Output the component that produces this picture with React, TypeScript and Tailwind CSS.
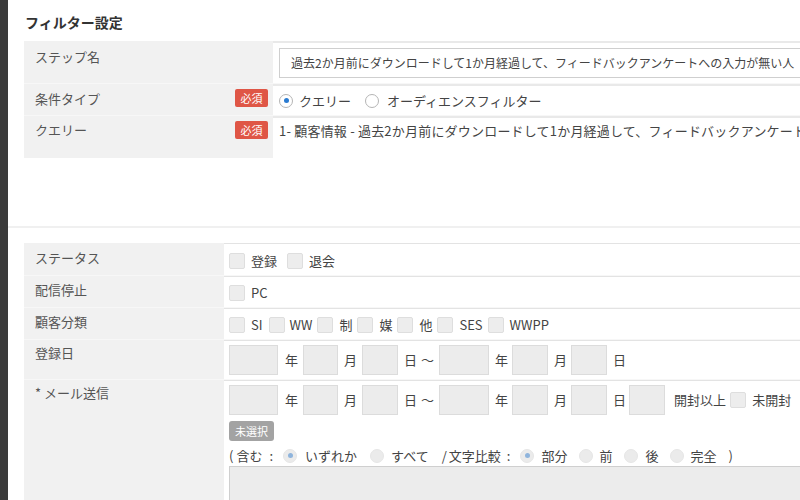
import React from "react";

const font = { fontFamily: '"Noto Sans CJK JP", "Noto Sans", sans-serif' };

function Badge() {
  return (
    <span className="flex h-[18px] w-[33px] items-center justify-center rounded-[2px] bg-[#df5646] text-[11px] leading-none text-white">
      必須
    </span>
  );
}

function Radio({ checked, disabled }: { checked?: boolean; disabled?: boolean }) {
  return (
    <span
      className={
        "flex h-[14px] w-[14px] shrink-0 items-center justify-center rounded-full border " +
        (disabled ? "border-[#e6e6e6] bg-[#ebebeb]" : "border-[#b5b5b5] bg-white")
      }
    >
      {checked ? (
        <span className={"h-[5px] w-[5px] rounded-full " + (disabled ? "bg-[#8fb4dc]" : "bg-[#2a7bd1]")} />
      ) : null}
    </span>
  );
}

function Check() {
  return <span className="block h-[16px] w-[16px] shrink-0 rounded-[2px] border border-[#dedede] bg-[#ededed]" />;
}

function DateBox({ w }: { w: string }) {
  return <span className={"block h-[30px] shrink-0 border border-[#dcdcdc] bg-[#ececec] " + w} />;
}

function DateRow({ extra }: { extra?: boolean }) {
  return (
    <div className="flex h-[30px] items-center text-[13px] leading-[20px] text-[#444]">
      <DateBox w="w-[49px]" />
      <span className="ml-[7px] mr-[5px]">年</span>
      <DateBox w="w-[35px]" />
      <span className="ml-[6px] mr-[5px]">月</span>
      <DateBox w="w-[36px]" />
      <span className="ml-[6px]">日</span>
      <span className="ml-[4px] mr-[5px]">〜</span>
      <DateBox w="w-[50px]" />
      <span className="ml-[6px] mr-[4px]">年</span>
      <DateBox w="w-[36px]" />
      <span className="ml-[6px] mr-[4px]">月</span>
      <DateBox w="w-[36px]" />
      <span className="ml-[6px]">日</span>
      {extra ? (
        <>
          <span className="ml-[3px] flex">
            <DateBox w="w-[36px]" />
          </span>
          <span className="ml-[9px] whitespace-nowrap">開封以上</span>
          <span className="ml-[4px] flex">
            <Check />
          </span>
          <span className="ml-[6px] whitespace-nowrap">未開封</span>
        </>
      ) : null}
    </div>
  );
}

export default function App() {
  return (
    <div className="flex h-[500px] w-[800px] overflow-hidden bg-white text-[#444]" style={font}>
      <div className="w-[8px] shrink-0 bg-[#3b3b3b]" />
      <div className="min-w-0 flex-1 overflow-hidden">
        <div className="w-[900px]">
          <div className="pl-[17px] pt-[12px] text-[14px] font-bold leading-[20px] text-[#333]">フィルター設定</div>

          {/* Table 1 */}
          <div className="ml-[16px] mt-[9px] flex flex-col bg-[#f1f1f1]">
            <div className="flex h-[42px]">
              <div className="w-[249px] shrink-0 pl-[11px] pt-[6px] text-[13px] leading-[20px] text-[#555]">ステップ名</div>
              <div className="flex-1 border-t-[2px] border-[#e9e9e9] bg-white pl-[6px] pt-[5px]">
                <div className="flex h-[30px] items-center border border-[#cfcfcf] bg-white pl-[11px] text-[12px] text-[#444]">
                  過去2か月前にダウンロードして1か月経過して、フィードバックアンケートへの入力が無い人
                </div>
              </div>
            </div>
            <div className="h-[1px] bg-[#f7f7f7]" />
            <div className="flex h-[31px]">
              <div className="flex w-[249px] shrink-0 items-start justify-between pl-[11px] pr-[5px] pt-[5px] text-[13px] leading-[20px] text-[#555]">
                <span>条件タイプ</span>
                <Badge />
              </div>
              <div className="flex flex-1 items-center border-t-[2px] border-[#e9e9e9] bg-white pl-[6px] text-[13px] leading-[20px] text-[#444]">
                <Radio checked />
                <span className="ml-[6px]">クエリー</span>
                <span className="ml-[14px] flex"><Radio /></span>
                <span className="ml-[8px]">オーディエンスフィルター</span>
              </div>
            </div>
            <div className="h-[1px] bg-[#f7f7f7]" />
            <div className="flex h-[42px]">
              <div className="flex w-[249px] shrink-0 items-start justify-between pl-[11px] pr-[5px] pt-[4px] text-[13px] leading-[20px] text-[#555]">
                <span>クエリー</span>
                <span className="mt-[1px] flex"><Badge /></span>
              </div>
              <div className="flex-1 whitespace-nowrap border-t-[2px] border-[#e9e9e9] bg-white pl-[6px] pt-[3px] text-[13px] leading-[20px] tracking-[0.2px] text-[#444]">
                1- 顧客情報 - 過去2か月前にダウンロードして1か月経過して、フィードバックアンケートへの入力が無い人
              </div>
            </div>
          </div>

          <div className="mt-[68px] h-[2px] bg-[#f0f0f0]" />

          {/* Table 2 */}
          <div className="ml-[16px] mt-[15px] flex flex-col bg-[#f1f1f1] text-[13px] leading-[20px]">
            <div className="flex h-[32px]">
              <div className="w-[200px] shrink-0 pl-[11px] pt-[5px] text-[#555]">ステータス</div>
              <div className="flex flex-1 items-center border-t border-[#e3e3e3] bg-white pl-[5px] pt-[2px] text-[#444]">
                <Check />
                <span className="ml-[6px]">登録</span>
                <span className="ml-[10px] flex"><Check /></span>
                <span className="ml-[6px]">退会</span>
              </div>
            </div>
            <div className="h-[1px] bg-[#f7f7f7]" />
            <div className="flex h-[31px]">
              <div className="w-[200px] shrink-0 pl-[11px] pt-[4px] text-[#555]">配信停止</div>
              <div className="flex flex-1 items-center border-t border-[#e3e3e3] bg-white pl-[5px] pt-[2px] text-[#444]">
                <Check />
                <span className="ml-[6px]">PC</span>
              </div>
            </div>
            <div className="h-[1px] bg-[#f7f7f7]" />
            <div className="flex h-[31px]">
              <div className="w-[200px] shrink-0 pl-[11px] pt-[4px] text-[#555]">顧客分類</div>
              <div className="flex flex-1 items-center border-t border-[#e3e3e3] bg-white pl-[5px] pt-[2px] text-[#444]">
                <Check />
                <span className="ml-[6px]">SI</span>
                <span className="ml-[6px] flex"><Check /></span>
                <span className="ml-[5px]">WW</span>
                <span className="ml-[5px] flex"><Check /></span>
                <span className="ml-[6px]">制</span>
                <span className="ml-[5px] flex"><Check /></span>
                <span className="ml-[6px]">媒</span>
                <span className="ml-[5px] flex"><Check /></span>
                <span className="ml-[6px]">他</span>
                <span className="ml-[5px] flex"><Check /></span>
                <span className="ml-[6px]">SES</span>
                <span className="ml-[5px] flex"><Check /></span>
                <span className="ml-[6px]">WWPP</span>
              </div>
            </div>
            <div className="h-[1px] bg-[#f7f7f7]" />
            <div className="flex h-[39px]">
              <div className="w-[200px] shrink-0 pl-[11px] pt-[3px] text-[#555]">登録日</div>
              <div className="flex flex-1 items-center border-t border-[#e3e3e3] bg-white pl-[5px]">
                <DateRow />
              </div>
            </div>
            <div className="h-[1px] bg-[#f7f7f7]" />
            <div className="flex h-[140px]">
              <div className="w-[200px] shrink-0 pl-[11px] pt-[3px] text-[#555]">* メール送信</div>
              <div className="flex flex-1 flex-col border-t border-[#e3e3e3] bg-white pl-[5px] pt-[4px]">
                <DateRow extra />
                <div className="mt-[6px] flex h-[20px] w-[45px] items-center justify-center rounded-[3px] bg-[#a3a3a3] text-[11px] text-white">
                  未選択
                </div>
                <div className="mt-[4px] flex h-[24px] items-center text-[13px] text-[#444]">
                  <span>(</span>
                  <span className="ml-[3px]">含む</span>
                  <span className="ml-[7px]">:</span>
                  <span className="ml-[10px] flex"><Radio checked disabled /></span>
                  <span className="ml-[8px]">いずれか</span>
                  <span className="ml-[13px] flex"><Radio disabled /></span>
                  <span className="ml-[7px]">すべて</span>
                  <span className="ml-[13px]">/</span>
                  <span className="ml-[2px]">文字比較</span>
                  <span className="ml-[6px]">:</span>
                  <span className="ml-[10px] flex"><Radio checked disabled /></span>
                  <span className="ml-[7px]">部分</span>
                  <span className="ml-[12px] flex"><Radio disabled /></span>
                  <span className="ml-[6px]">前</span>
                  <span className="ml-[12px] flex"><Radio disabled /></span>
                  <span className="ml-[7px]">後</span>
                  <span className="ml-[12px] flex"><Radio disabled /></span>
                  <span className="ml-[6px]">完全</span>
                  <span className="ml-[12px]">)</span>
                </div>
                <div className="mt-[0px] h-[60px] border border-[#cfcfcf] bg-[#ececec]" />
              </div>
            </div>
          </div>
        </div>
      </div>
    </div>
  );
}
